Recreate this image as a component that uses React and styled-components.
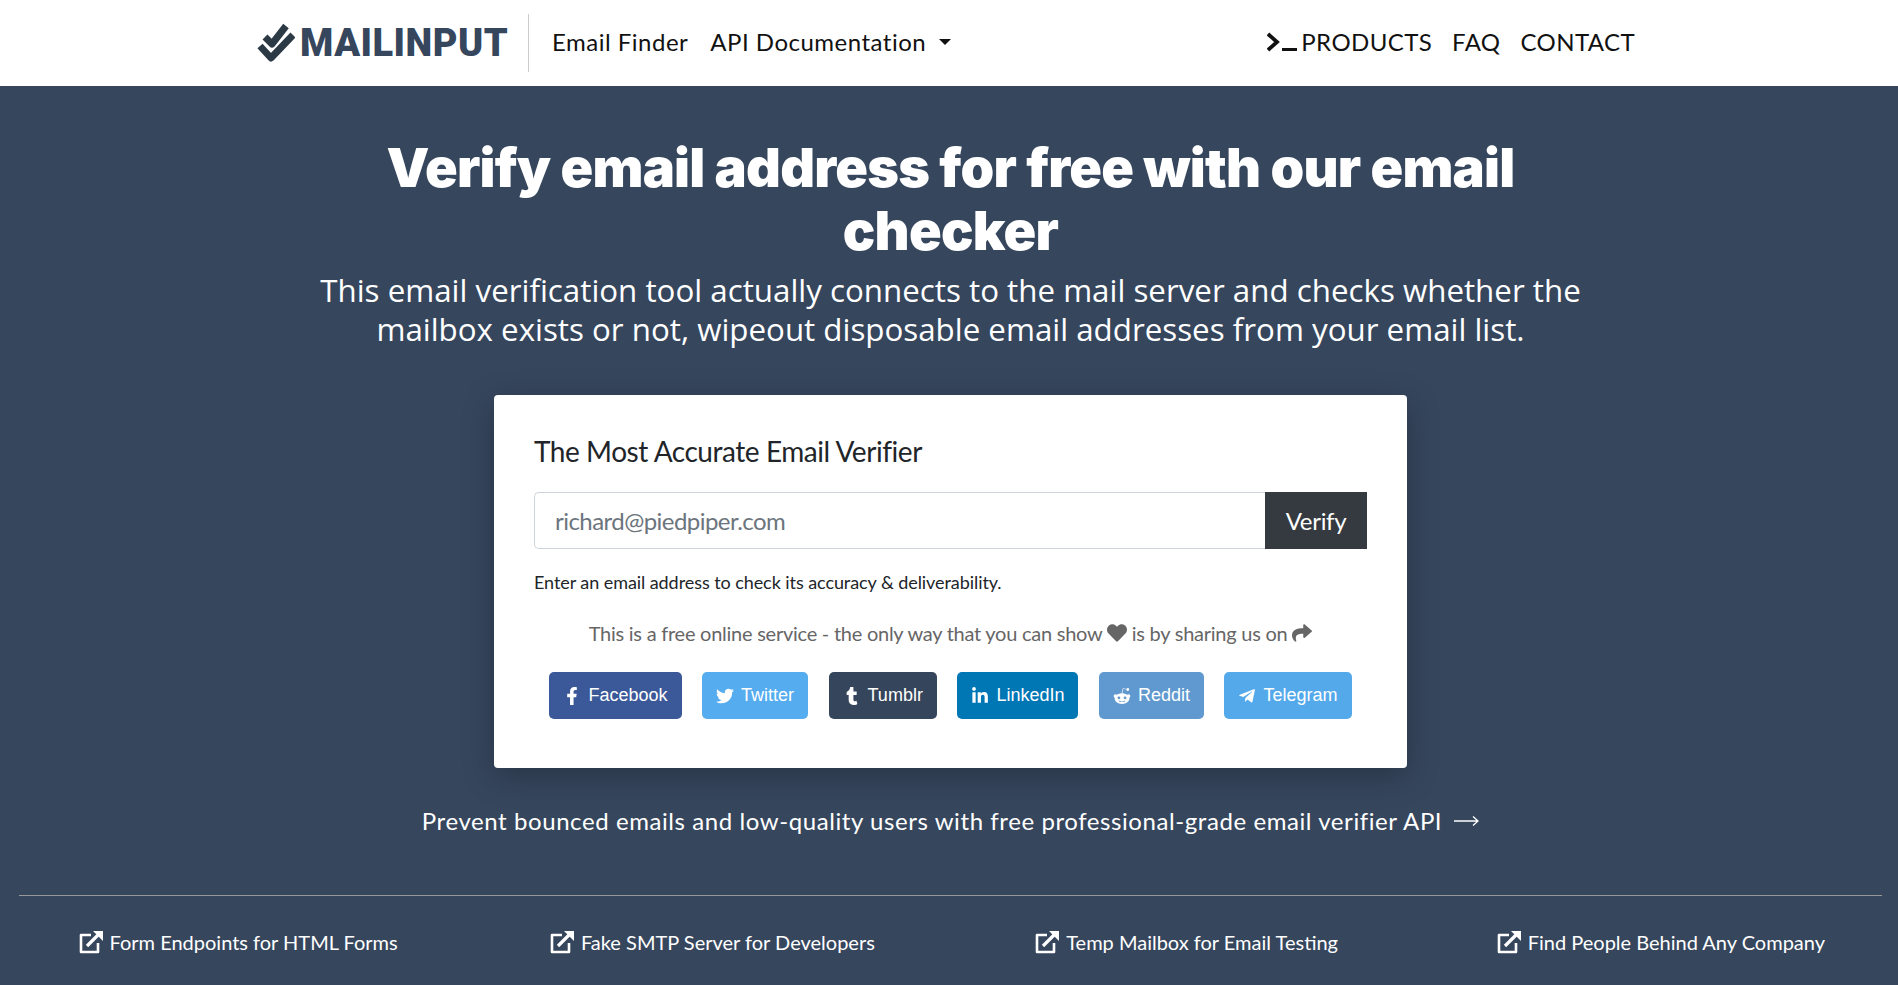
import styled, { createGlobalStyle } from 'styled-components'
import { FaFacebookF, FaTwitter, FaTumblr, FaLinkedinIn, FaRedditAlien, FaTelegramPlane, FaHeart, FaShare } from 'react-icons/fa'

const GlobalStyle = createGlobalStyle`
* { box-sizing: border-box; }
body {
  margin: 0;
  font-family: Lato, sans-serif;
  background: #36465d;
}
`

const Page = styled.div`
min-height: 985px;
background-color: #36465d;
overflow: hidden;
`

const Navbar = styled.nav`
height: 86px;
background: #fff;
display: flex;
align-items: center;
padding: 0 258px;
`

const Brand = styled.a`
display: flex;
align-items: center;
height: 58px;
width: 271px;
border-right: 1px solid #ccc;
color: #36465d;
font-family: Roboto, sans-serif;
font-weight: 900;
font-size: 38px;
letter-spacing: 0.5px;
`

const NavLeft = styled.div`
display: flex;
align-items: center;
gap: 22px;
margin-left: 23px;
margin-top: -3px;
font-size: 24px;
letter-spacing: 0.5px;
`

const NavRight = styled.div`
display: flex;
align-items: center;
gap: 20px;
margin-left: auto;
margin-right: 5px;
margin-top: -3px;
font-size: 24px;
letter-spacing: 0.4px;
`

const NavLink = styled.a`
color: #111;
display: flex;
align-items: center;
`

const Caret = styled.span`
width: 0;
height: 0;
margin-left: 13px;
border-top: 6px solid #111;
border-left: 6px solid transparent;
border-right: 6px solid transparent;
`

const Hero = styled.section`
text-align: center;
color: #fff;
padding-top: 50px;
padding-left: 3px;
`

const Title = styled.h1`
margin: 0 auto 9px;
width: 1200px;
font-family: Inter, sans-serif;
font-size: 54px;
line-height: 63px;
font-weight: 900;
letter-spacing: -0.75px;
`

const Lead = styled.p`
margin: 0 auto;
width: 1300px;
font-family: "Open Sans", sans-serif;
font-size: 31.3px;
line-height: 38.5px;
`

const Card = styled.div`
width: 913px;
height: 373px;
margin: 47px auto 0;
padding: 39px 40px;
background: #fff;
border-radius: 4px;
box-shadow: 0 8px 32px rgba(0, 0, 0, 0.25);
color: #212529;
text-align: left;
`

const CardTitle = styled.h2`
margin: 0;
font-size: 28px;
line-height: 34px;
font-weight: 400;
letter-spacing: -0.45px;
`

const InputGroup = styled.div`
display: flex;
height: 57px;
margin-top: 24px;
`

const EmailInput = styled.input`
flex: 1;
min-width: 0;
padding: 0 20px;
font-family: Lato, sans-serif;
font-size: 24px;
letter-spacing: -0.55px;
color: #495057;
border: 1px solid #ced4da;
border-right: 0;
border-radius: 5px 0 0 5px;
outline: none;
&::placeholder { color: #6c757d; opacity: 1; }
`

const VerifyButton = styled.button`
width: 102px;
background: #343a40;
color: #fff;
border: 0;
font-family: Lato, sans-serif;
font-size: 24px;
letter-spacing: -0.3px;
`

const Hint = styled.p`
margin: 22px 0 0;
font-size: 18px;
line-height: 22px;
letter-spacing: -0.07px;
`

const Share = styled.p`
margin: 28px 0 0;
font-size: 20px;
line-height: 24px;
letter-spacing: -0.25px;
color: #666;
text-align: center;
svg { vertical-align: -2px; }
`

const ShareRow = styled.div`
display: flex;
justify-content: center;
gap: 20.5px;
margin-top: 27px;
`

const ShareButton = styled.a`
height: 47px;
display: flex;
align-items: center;
padding: 0 14px 0 13px;
background: ${p => p.$bg};
color: #fff;
border-radius: 5px;
font-family: "Liberation Sans", Arial, sans-serif;
font-size: 18px;
`

const ShareIcon = styled.span`
width: 20px;
margin-right: 6px;
display: flex;
justify-content: center;
`

const ApiLine = styled.p`
display: flex;
align-items: center;
justify-content: center;
margin: 38px 0 0;
font-size: 24px;
line-height: 30px;
letter-spacing: 0.58px;
color: #fff;
`

const Divider = styled.hr`
margin: 59px 16px 0 19px;
border: 0;
border-top: 1px solid #999;
`

const FooterLinks = styled.div`
display: grid;
grid-template-columns: repeat(4, 1fr);
padding: 34px 0 0 1px;
`

const FooterLink = styled.a`
display: flex;
align-items: center;
justify-content: center;
gap: 7px;
color: #fff;
font-size: 20px;
line-height: 24px;
`

const Logo = () => (
  <svg width="38" height="40" viewBox="0 0 38 40" style={{ marginRight: 5, marginLeft: -1 }}>
    <path d="M8 14 L15 21 L29 3 M3 23 L14 35 L36 12" fill="none" stroke="#2c3a46" strokeWidth="7" strokeLinejoin="round" />
  </svg>
)

const Prompt = () => (
  <svg width="30" height="20" viewBox="0 0 30 20" style={{ marginRight: 4 }}>
    <path d="M1 2 L10 10 L1 18" fill="none" stroke="#111" strokeWidth="3.8" />
    <rect x="15" y="16" width="15" height="3" fill="#111" />
  </svg>
)

const LongArrow = () => (
  <svg width="25" height="12" viewBox="0 0 25 12" style={{ marginLeft: 12 }}>
    <path d="M0 6 H24 M19 1.5 L24 6 L19 10.5" fill="none" stroke="#fff" strokeWidth="1.3" />
  </svg>
)

const LinkOut = () => (
  <svg width="24" height="24" viewBox="0 0 24 24">
    <path d="M12 5 H2 V22 H19 V13" fill="none" stroke="#fff" strokeWidth="2.6" strokeLinejoin="round" />
    <path d="M8 16 L20 4" fill="none" stroke="#fff" strokeWidth="3.2" />
    <path d="M14 1 H24 V11 Z" fill="#fff" />
  </svg>
)

const shares = [
  { name: 'Facebook', bg: '#3b5998', Icon: FaFacebookF },
  { name: 'Twitter', bg: '#55acee', Icon: FaTwitter },
  { name: 'Tumblr', bg: '#35465c', Icon: FaTumblr },
  { name: 'LinkedIn', bg: '#0077b5', Icon: FaLinkedinIn },
  { name: 'Reddit', bg: '#5f99cf', Icon: FaRedditAlien },
  { name: 'Telegram', bg: '#54a9eb', Icon: FaTelegramPlane },
]

const footerLinks = [
  'Form Endpoints for HTML Forms',
  'Fake SMTP Server for Developers',
  'Temp Mailbox for Email Testing',
  'Find People Behind Any Company',
]

const App = () => {
  return (
    <Page>
      <GlobalStyle />
      <Navbar>
        <Brand><Logo />MAILINPUT</Brand>
        <NavLeft>
          <NavLink>Email Finder</NavLink>
          <NavLink>API Documentation<Caret /></NavLink>
        </NavLeft>
        <NavRight>
          <NavLink><Prompt />PRODUCTS</NavLink>
          <NavLink>FAQ</NavLink>
          <NavLink>CONTACT</NavLink>
        </NavRight>
      </Navbar>
      <Hero>
        <Title>Verify email address for free with our email checker</Title>
        <Lead>This email verification tool actually connects to the mail server and checks whether the mailbox exists or not, wipeout disposable email addresses from your email list.</Lead>
        <Card>
          <CardTitle>The Most Accurate Email Verifier</CardTitle>
          <InputGroup>
            <EmailInput placeholder="richard@piedpiper.com" />
            <VerifyButton>Verify</VerifyButton>
          </InputGroup>
          <Hint>Enter an email address to check its accuracy &amp; deliverability.</Hint>
          <Share>This is a free online service - the only way that you can show <FaHeart size={20} /> is by sharing us on <FaShare size={20} /></Share>
          <ShareRow>
            {shares.map(({ name, bg, Icon }) => (
              <ShareButton key={name} $bg={bg}><ShareIcon><Icon size={18} /></ShareIcon>{name}</ShareButton>
            ))}
          </ShareRow>
        </Card>
        <ApiLine>Prevent bounced emails and low-quality users with free professional-grade email verifier API<LongArrow /></ApiLine>
      </Hero>
      <Divider />
      <FooterLinks>
        {footerLinks.map(text => (
          <FooterLink key={text}><LinkOut />{text}</FooterLink>
        ))}
      </FooterLinks>
    </Page>
  )
}

export default App
